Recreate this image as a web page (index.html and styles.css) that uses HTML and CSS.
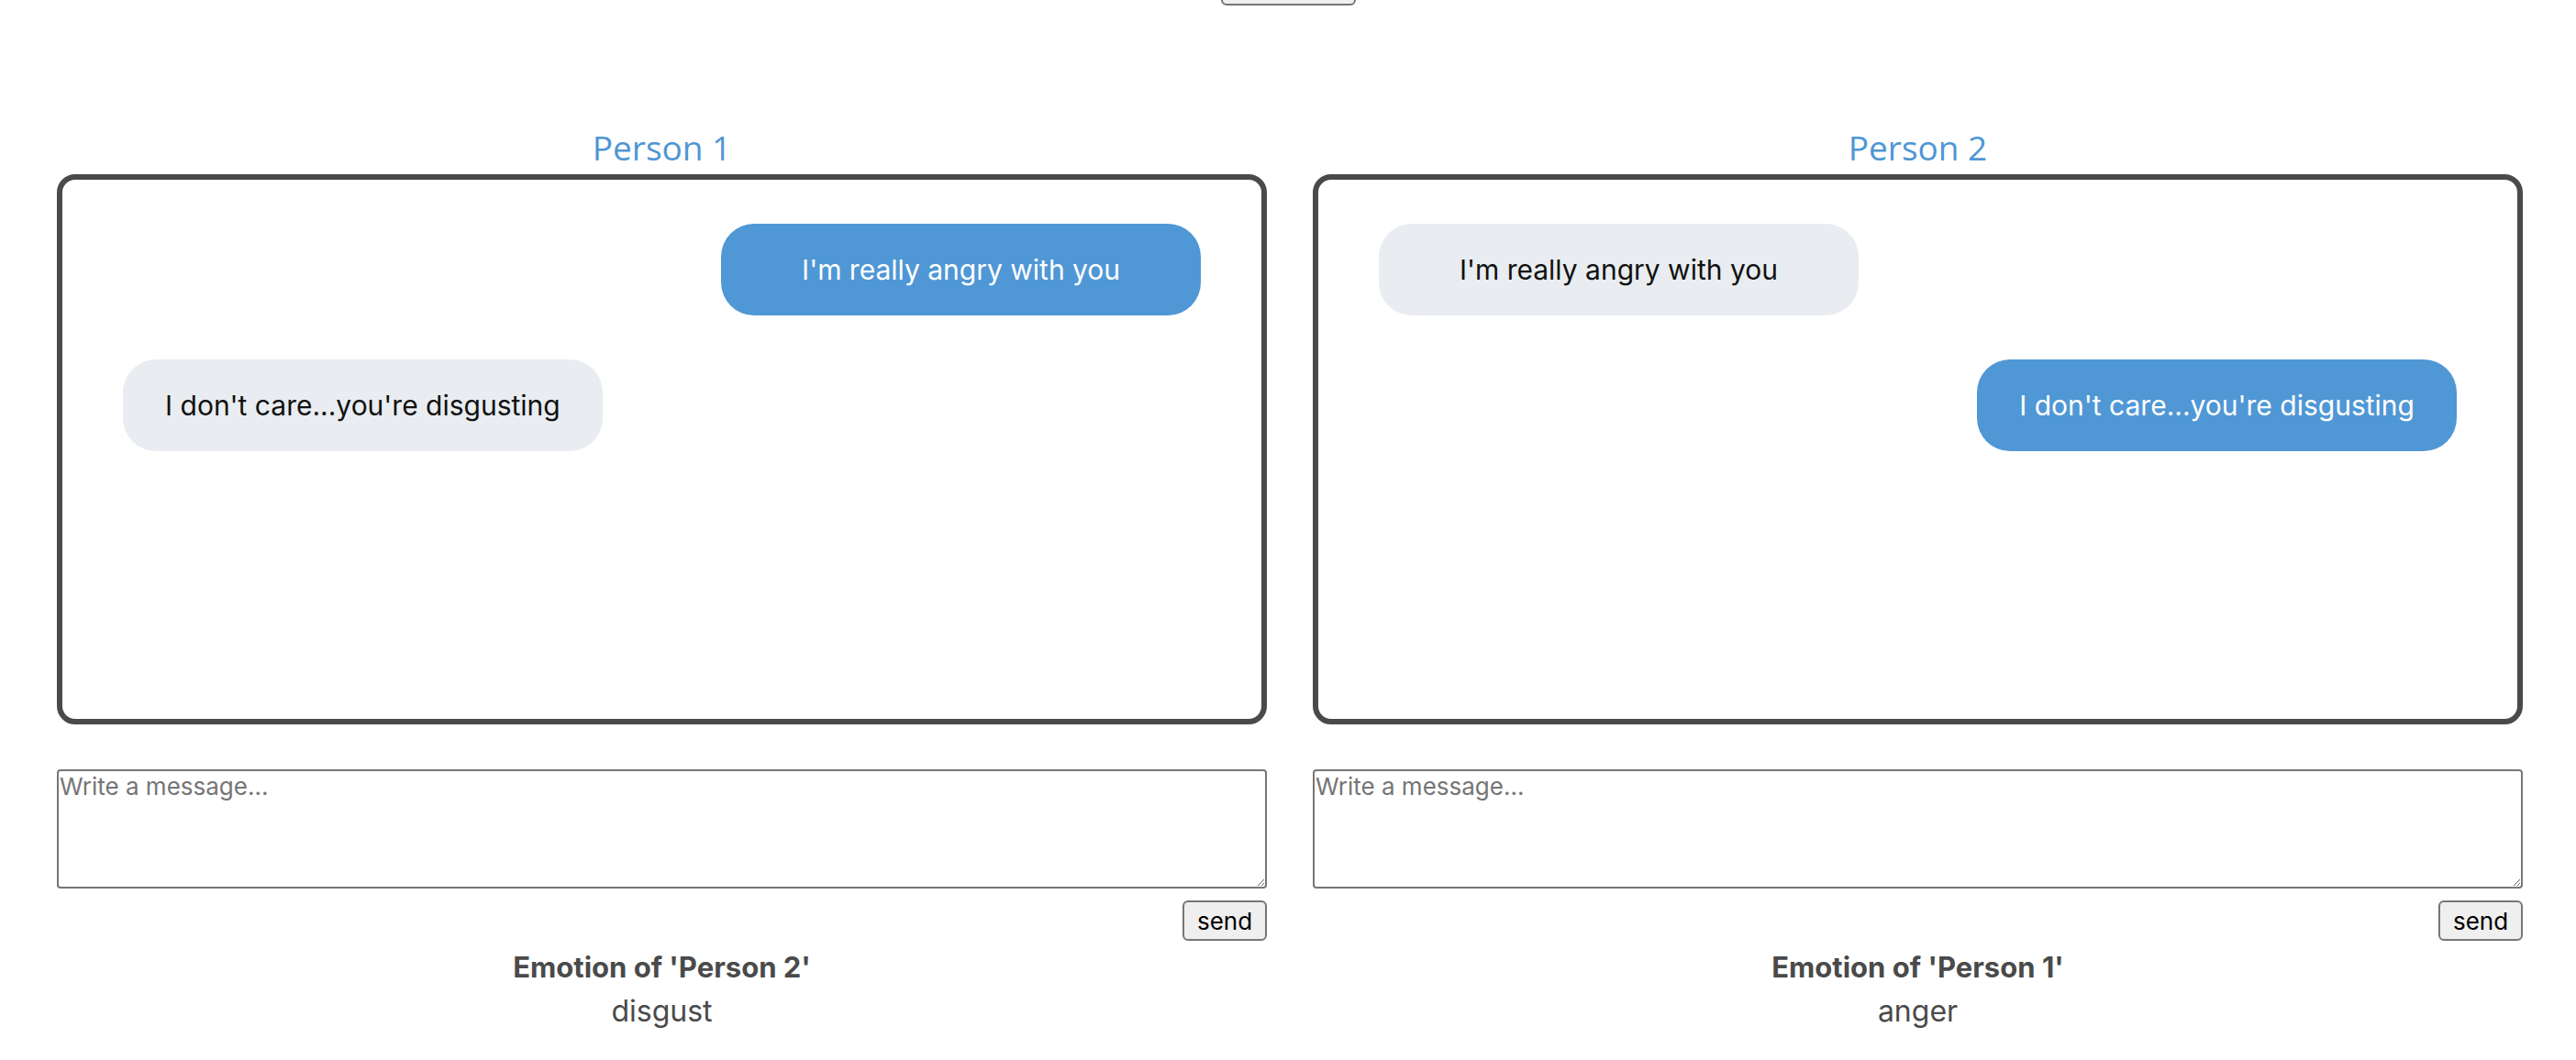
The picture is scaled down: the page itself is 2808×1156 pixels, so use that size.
FILE: index.html
```html
<!DOCTYPE html>
<html lang="en">
<head>
<meta charset="utf-8">
<title>Emotion chat</title>
<link rel="stylesheet" href="styles.css">
</head>
<body>
<div class="page">
  <div class="top">
    <button class="top-btn" aria-label="toggle"></button>
  </div>
  <div class="chats">
    <section class="col">
      <h2 class="person">Person 1</h2>
      <div class="box">
        <div class="msg sent">I'm really angry with you</div>
        <div class="msg recv">I don't care...you're disgusting</div>
      </div>
      <textarea class="input" placeholder="Write a message..."></textarea>
      <div class="actions"><button class="send">send</button></div>
      <div class="emotion">
        <div class="emo-label">Emotion of 'Person 2'</div>
        <div class="emo-value">disgust</div>
      </div>
    </section>
    <section class="col">
      <h2 class="person">Person 2</h2>
      <div class="box">
        <div class="msg recv">I'm really angry with you</div>
        <div class="msg sent">I don't care...you're disgusting</div>
      </div>
      <textarea class="input" placeholder="Write a message..."></textarea>
      <div class="actions"><button class="send">send</button></div>
      <div class="emotion">
        <div class="emo-label">Emotion of 'Person 1'</div>
        <div class="emo-value">anger</div>
      </div>
    </section>
  </div>
</div>
</body>
</html>
```
FILE: styles.css
```css
html, body {
  margin: 0;
  padding: 0;
  background: #ffffff;
}

body {
  font-family: Inter, "Noto Sans", sans-serif;
  color: #000;
}

.page {
  display: flex;
  flex-direction: column;
}

.top {
  height: 6px;
  display: flex;
  justify-content: center;
  align-items: flex-end;
}

.top-btn {
  width: 147px;
  height: 44px;
  flex: none;
  background: #efefef;
  border: 2px solid #767676;
  border-radius: 6px;
  padding: 0;
}

.chats {
  display: grid;
  grid-template-columns: 1fr 1fr;
  column-gap: 50px;
  padding: 0 58px 0 62px;
  margin-top: 133px;
}

.col {
  display: flex;
  flex-direction: column;
  min-width: 0;
}

.person {
  margin: 0 0 7px;
  font-family: "Open Sans", "Noto Sans", sans-serif;
  font-weight: 400;
  font-size: 37px;
  line-height: 44px;
  color: #4f96d4;
  text-align: center;
}

.box {
  height: 600px;
  box-sizing: border-box;
  border: 6px solid #4a4a4a;
  border-radius: 20px;
  padding: 48px 0;
  display: flex;
  flex-direction: column;
  gap: 48px;
}

.msg {
  width: 40%;
  height: 100px;
  margin: 0 66px;
  border-radius: 36px;
  display: flex;
  align-items: center;
  justify-content: center;
  font-size: 30px;
  flex: none;
}

.sent {
  align-self: flex-end;
  background: #5097d5;
  color: #ffffff;
}

.recv {
  align-self: flex-start;
  background: #e9ecf0;
  color: #111111;
}

.input {
  display: block;
  margin-top: 49px;
  width: 100%;
  height: 130px;
  box-sizing: border-box;
  border: 2px solid #767676;
  border-radius: 4px;
  padding: 1px 1px;
  font-family: Inter, "Noto Sans", sans-serif;
  font-size: 26px;
  background: #fff;
}

.input::placeholder {
  color: #757575;
}

.actions {
  display: flex;
  justify-content: flex-end;
  margin-top: 13px;
}

.send {
  width: 92px;
  height: 44px;
  padding: 0;
  background: #efefef;
  border: 2px solid #767676;
  border-radius: 6px;
  font-family: Inter, "Noto Sans", sans-serif;
  font-size: 26px;
  color: #000;
}

.emotion {
  margin-top: 5px;
  text-align: center;
  color: #4a4a4a;
  font-size: 32px;
  line-height: 48px;
}

.emo-label {
  font-weight: 700;
  font-size: 31px;
}
```
